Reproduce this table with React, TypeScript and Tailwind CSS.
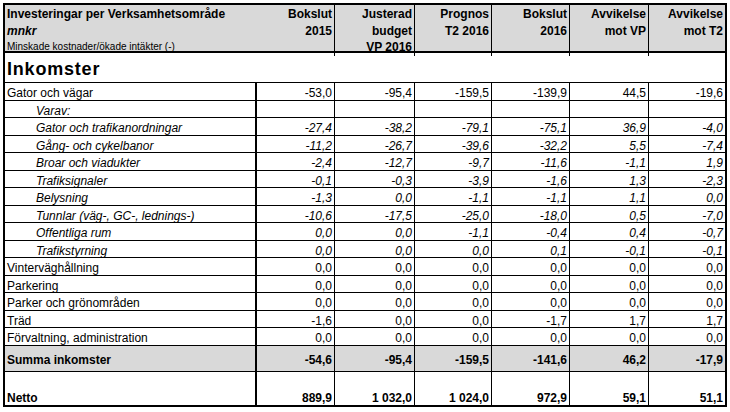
import React from "react";

type Row = { label: string; vals: string[]; italic?: boolean };

const rows: Row[] = [
  { label: "Gator och vägar", vals: ["-53,0", "-95,4", "-159,5", "-139,9", "44,5", "-19,6"] },
  { label: "Varav:", vals: ["", "", "", "", "", ""], italic: true },
  { label: "Gator och trafikanordningar", vals: ["-27,4", "-38,2", "-79,1", "-75,1", "36,9", "-4,0"], italic: true },
  { label: "Gång- och cykelbanor", vals: ["-11,2", "-26,7", "-39,6", "-32,2", "5,5", "-7,4"], italic: true },
  { label: "Broar och viadukter", vals: ["-2,4", "-12,7", "-9,7", "-11,6", "-1,1", "1,9"], italic: true },
  { label: "Trafiksignaler", vals: ["-0,1", "-0,3", "-3,9", "-1,6", "1,3", "-2,3"], italic: true },
  { label: "Belysning", vals: ["-1,3", "0,0", "-1,1", "-1,1", "1,1", "0,0"], italic: true },
  { label: "Tunnlar (väg-, GC-, lednings-)", vals: ["-10,6", "-17,5", "-25,0", "-18,0", "0,5", "-7,0"], italic: true },
  { label: "Offentliga rum", vals: ["0,0", "0,0", "-1,1", "-0,4", "0,4", "-0,7"], italic: true },
  { label: "Trafikstyrning", vals: ["0,0", "0,0", "0,0", "0,1", "-0,1", "-0,1"], italic: true },
  { label: "Vinterväghållning", vals: ["0,0", "0,0", "0,0", "0,0", "0,0", "0,0"] },
  { label: "Parkering", vals: ["0,0", "0,0", "0,0", "0,0", "0,0", "0,0"] },
  { label: "Parker och grönområden", vals: ["0,0", "0,0", "0,0", "0,0", "0,0", "0,0"] },
  { label: "Träd", vals: ["-1,6", "0,0", "0,0", "-1,7", "1,7", "1,7"] },
  { label: "Förvaltning, administration", vals: ["0,0", "0,0", "0,0", "0,0", "0,0", "0,0"] },
];

const grid = "grid grid-cols-[252px_78px_80px_77px_78px_79px_76px]";

function NumCells({ vals, className = "" }: { vals: string[]; className?: string }) {
  return (
    <>
      {vals.map((v, i) => (
        <div
          key={i}
          className={
            "flex justify-end pr-[2px] " +
            (i < vals.length - 1 ? "border-r border-black " : "") +
            className
          }
        >
          {v}
        </div>
      ))}
    </>
  );
}

export default function App() {
  return (
    <div className="w-[730px] h-[412px] bg-white overflow-hidden">
      <div
        className="ml-[3px] mt-[3px] w-[724px] border-2 border-black text-black text-[12px]"
        style={{ fontFamily: '"Liberation Sans", Arial, sans-serif' }}
      >
        {/* Header */}
        <div className={grid + " h-[48px] bg-[#d9d9d9] border-b-2 border-black leading-[16.5px] font-bold"}>
          <div className="pl-[2px] pt-[1px]">
            <div>Investeringar per Verksamhetsområde</div>
            <div className="italic">mnkr</div>
            <div className="font-normal text-[10px]">Minskade kostnader/ökade intäkter (-)</div>
          </div>
          <div className="text-right pr-[2px] pt-[1px] border-r border-black">
            <div>Bokslut</div>
            <div>2015</div>
          </div>
          <div className="text-right pr-[2px] pt-[1px] border-r border-black">
            <div>Justerad</div>
            <div>budget</div>
            <div>VP 2016</div>
          </div>
          <div className="text-right pr-[2px] pt-[1px] border-r border-black">
            <div>Prognos</div>
            <div>T2 2016</div>
          </div>
          <div className="text-right pr-[2px] pt-[1px] border-r border-black">
            <div>Bokslut</div>
            <div>2016</div>
          </div>
          <div className="text-right pr-[2px] pt-[1px] border-r border-black">
            <div>Avvikelse</div>
            <div>mot VP</div>
          </div>
          <div className="text-right pr-[2px] pt-[1px]">
            <div>Avvikelse</div>
            <div>mot T2</div>
          </div>
        </div>

        {/* Inkomster */}
        <div className="h-[30px] border-b border-black flex items-center pl-[2px] pt-[3px]">
          <span className="font-bold text-[18px] tracking-[0.8px]">Inkomster</span>
        </div>

        {/* Body rows */}
        {rows.map((r, idx) => (
          <div
            key={idx}
            className={
              grid +
              (idx % 2 === 0 ? " h-[18px]" : " h-[17px]") +
              " border-b border-black leading-[14px]" +
              (r.italic ? " italic" : "")
            }
          >
            <div className={"pt-[3px] border-r-2 border-black " + (r.italic ? "pl-[31px]" : "pl-[2px]")}>
              {r.label}
            </div>
            <NumCells vals={r.vals} className="items-start pt-[3px]" />
          </div>
        ))}

        {/* Summa */}
        <div className={grid + " h-[26px] border-b border-black bg-[#d9d9d9] font-bold leading-[14px]"}>
          <div className="border-r-2 border-black pl-[2px] pt-[3px] flex items-center">Summa inkomster</div>
          <NumCells vals={["-54,6", "-95,4", "-159,5", "-141,6", "46,2", "-17,9"]} className="items-center pt-[3px]" />
        </div>

        {/* Netto */}
        <div className={grid + " h-[33px] font-bold leading-[13px]"}>
          <div className="border-r-2 border-black pl-[2px] flex items-end">Netto</div>
          <NumCells vals={["889,9", "1 032,0", "1 024,0", "972,9", "59,1", "51,1"]} className="items-end" />
        </div>
      </div>
    </div>
  );
}
